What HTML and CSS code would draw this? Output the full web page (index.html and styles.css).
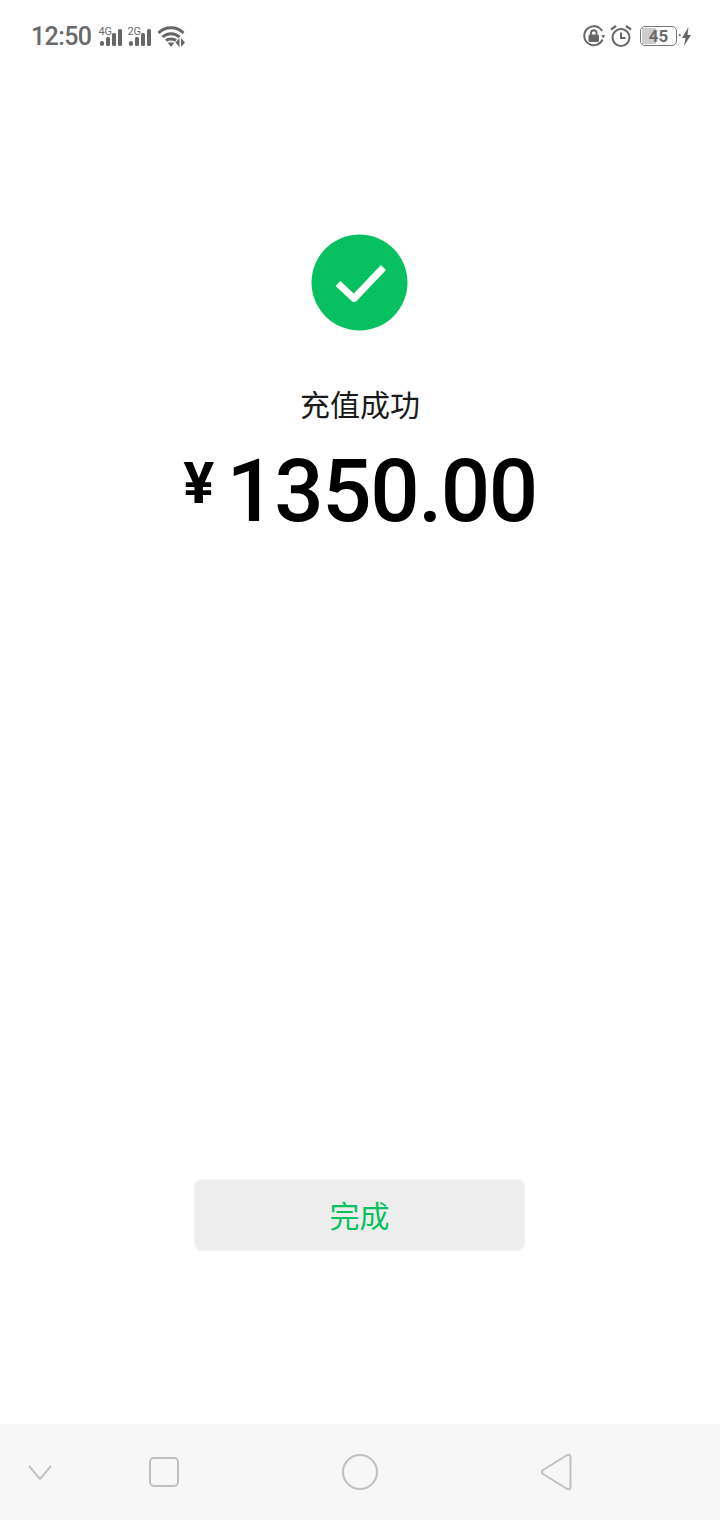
FILE: index.html
```html
<!DOCTYPE html>
<html lang="zh-CN">
<head>
<meta charset="utf-8">
<title>充值成功</title>
<link rel="stylesheet" href="styles.css">
</head>
<body>
<div class="screen">
  <header class="status">
    <div class="status-left">
      <span class="clock">12:50</span>
      <span class="signal">
        <span class="net">4G</span>
        <svg class="bars" width="24" height="20" viewBox="0 0 24 20"><g fill="#666"><rect x="1" y="14" width="4" height="5" rx="2"/><rect x="7" y="10" width="4" height="9" rx="1.500"/><rect x="13" y="6" width="4" height="13" rx="1.500"/><rect x="19" y="2" width="4" height="17" rx="1.500"/></g></svg>
      </span>
      <span class="signal">
        <span class="net">2G</span>
        <svg class="bars" width="24" height="20" viewBox="0 0 24 20"><g fill="#666"><rect x="1" y="14" width="4" height="5" rx="2"/><rect x="7" y="10" width="4" height="9" rx="1.500"/><rect x="13" y="6" width="4" height="13" rx="1.500"/><rect x="19" y="2" width="4" height="17" rx="1.500"/></g></svg>
      </span>
      <svg class="wifi" width="30" height="24" viewBox="0 0 30 24"><g fill="none" stroke="#666" stroke-width="3"><path d="M1.500 8C8 1 20 1 26.500 8"/><path d="M5.500 12C10 7.500 18 7.500 22.500 12"/><path d="M9 15.500C11.500 13.500 16.500 13.500 19 15.500"/></g><path d="M10.500 17.500h7l-3.500 4.500z" fill="#666"/><path d="M22.500 13v9l-4-4.500zM24 13v9l4-4.500z" fill="#666"/></svg>
    </div>
    <div class="status-right">
      <svg width="24" height="24" viewBox="0 0 24 24"><path d="M20.500 15.500A9.500 9.500 0 1 1 20 7" fill="none" stroke="#666" stroke-width="2"/><path d="M23 11l-4 .5 2.500 3z" fill="#666"/><rect x="6.500" y="10.500" width="10.500" height="7.500" rx="1.500" fill="#666"/><path d="M9 11V8.500a2.800 2.800 0 0 1 5.500 0V11" fill="none" stroke="#666" stroke-width="1.800"/></svg>
      <svg class="alarm" width="24" height="24" viewBox="0 0 24 24"><circle cx="12" cy="13.500" r="8.500" fill="none" stroke="#666" stroke-width="2"/><path d="M12 8.500v5.500h4.500" fill="none" stroke="#666" stroke-width="2"/><path d="M2 5.500L7 2M22 5.500L17 2" stroke="#666" stroke-width="2.200" fill="none"/></svg>
      <span class="battery"><span class="battery-fill"></span><span class="battery-level">45</span></span>
      <svg class="bolt" width="12" height="22" viewBox="0 0 12 22"><circle cx="0.800" cy="10" r="1" fill="#666"/><path d="M9.500 2L3 13H6.500L5 21L12 10H8.500z" fill="#666"/></svg>
    </div>
  </header>

  <main class="result">
    <svg class="tick" width="97" height="97" viewBox="0 0 97 97"><circle cx="48.500" cy="48.500" r="48" fill="#07c160"/><path d="M27 49.500L43 64.500L72.500 33.500" fill="none" stroke="#fff" stroke-width="7" stroke-linejoin="round"/></svg>
    <h1 class="title">充值成功</h1>
    <p class="amount"><span class="yen">¥</span><span class="sum">1350.00</span></p>
  </main>

  <div class="actions">
    <button class="done" type="button">完成</button>
  </div>

  <nav class="navbar">
    <svg class="nav-chevron" width="26" height="16" viewBox="0 0 26 16"><path d="M2 2L13 15L24 2" fill="none" stroke="#c4c4c4" stroke-width="2" stroke-linejoin="round"/></svg>
    <svg class="nav-square" width="30" height="30" viewBox="0 0 30 30"><rect x="1" y="1" width="28" height="28" rx="4" fill="none" stroke="#c0c0c0" stroke-width="2"/></svg>
    <svg class="nav-circle" width="36" height="36" viewBox="0 0 36 36"><circle cx="18" cy="18" r="17" fill="none" stroke="#c0c0c0" stroke-width="2"/></svg>
    <svg class="nav-back" width="32" height="38" viewBox="0 0 32 38"><path d="M26.500 2.500Q30.500 0.500 30.500 4.500V33.500Q30.500 37.500 26.500 35.500L3 21Q0.500 19 3 17z" fill="none" stroke="#c0c0c0" stroke-width="2" stroke-linejoin="round"/></svg>
  </nav>
</div>
</body>
</html>
```
FILE: styles.css
```css
* { box-sizing: border-box; }

html, body {
  margin: 0;
  padding: 0;
  background: #fff;
}

body {
  font-family: Roboto, "Noto Sans CJK SC", sans-serif;
}

.screen {
  width: 720px;
  height: 1520px;
  display: flex;
  flex-direction: column;
  overflow: hidden;
}

/* status bar */
.status {
  height: 72px;
  padding: 0 29px 0 31px;
  display: flex;
  justify-content: space-between;
  align-items: center;
  color: #6a6a6a;
  flex: none;
}

.status-left,
.status-right {
  display: flex;
  align-items: center;
}

.clock {
  font-size: 25px;
  font-weight: 500;
  line-height: 30px;
  letter-spacing: -0.6px;
  margin: 2px 7px 0 0;
}

.signal {
  position: relative;
  width: 29px;
  height: 24px;
  display: block;
}

.net {
  position: absolute;
  left: 0;
  top: 2px;
  font-size: 11px;
  line-height: 12px;
}

.bars {
  position: absolute;
  left: 1px;
  top: 3px;
}

.wifi { margin: 1px 0 0 1px; }

.alarm { margin-left: 3px; }

.battery {
  position: relative;
  width: 37px;
  height: 20px;
  margin-left: 7px;
  border: 1.5px solid #777;
  border-radius: 5px;
  display: flex;
  align-items: center;
  justify-content: center;
  overflow: hidden;
}

.battery-fill {
  position: absolute;
  left: 1px;
  top: 1px;
  bottom: 1px;
  width: 14px;
  background: #ccc;
}

.battery-level {
  position: relative;
  font-size: 17px;
  font-weight: 700;
  line-height: 20px;
}

.bolt { margin-left: 2px; }

/* payment result */
.result {
  flex: none;
  display: flex;
  flex-direction: column;
  align-items: center;
  padding-top: 162px;
}

.tick {
  display: block;
  margin: 0 1px 0 0;
}

.title {
  margin: 53px 0 0;
  font-size: 30px;
  font-weight: 400;
  line-height: 44px;
  color: #1a1a1a;
}

.amount {
  margin: 18px 0 0;
  display: flex;
  align-items: flex-start;
  color: #000;
}

.yen {
  font-size: 58px;
  font-weight: 700;
  line-height: 90px;
  margin: -8px 12px 0 0;
}

.sum {
  font-size: 87px;
  font-weight: 500;
  line-height: 90px;
  letter-spacing: -1.5px;
}

/* bottom action */
.actions {
  margin-top: auto;
  padding-bottom: 173px;
  display: flex;
  justify-content: center;
}

.done {
  width: 331px;
  height: 72px;
  margin-left: -1px;
  padding: 0 0 2px;
  background: #ededed;
  border: 2px solid #f0f0f0;
  border-radius: 8px;
  color: #07c160;
  font-family: inherit;
  font-size: 30px;
}

/* navigation bar */
.navbar {
  height: 96px;
  flex: none;
  background: #f7f7f7;
  position: relative;
}

.navbar svg { position: absolute; }

.nav-chevron { left: 27px; top: 40px; }
.nav-square { left: 149px; top: 33px; }
.nav-circle { left: 342px; top: 30px; }
.nav-back { left: 540px; top: 29px; }
```
